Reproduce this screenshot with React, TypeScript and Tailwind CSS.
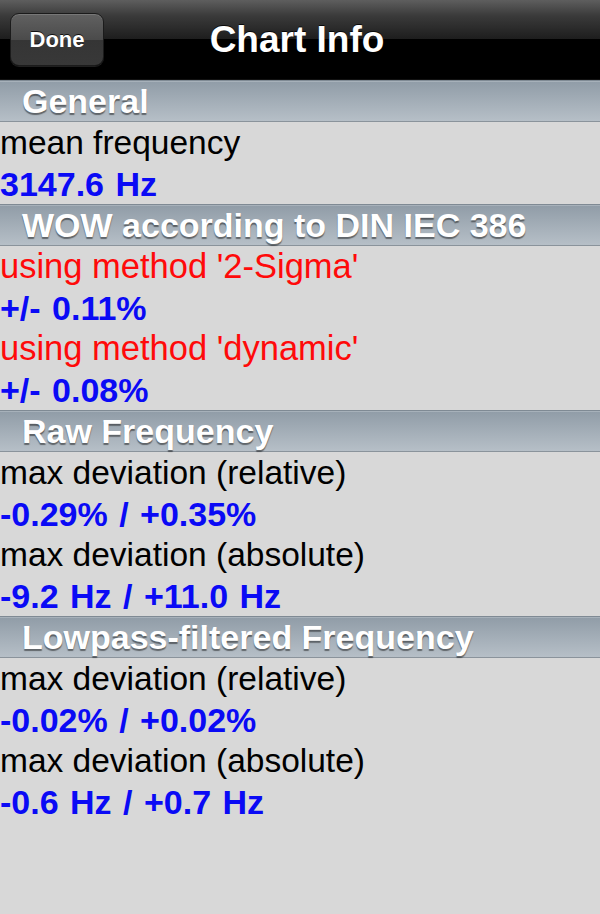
import React from "react";

type Row = { text: string; kind: "label" | "value" | "method" };
type Section = { title: string; rows: Row[] };

const sections: Section[] = [
  {
    title: "General",
    rows: [
      { text: "mean frequency", kind: "label" },
      { text: "3147.6 Hz", kind: "value" },
    ],
  },
  {
    title: "WOW according to DIN IEC 386",
    rows: [
      { text: "using method '2-Sigma'", kind: "method" },
      { text: "+/- 0.11%", kind: "value" },
      { text: "using method 'dynamic'", kind: "method" },
      { text: "+/- 0.08%", kind: "value" },
    ],
  },
  {
    title: "Raw Frequency",
    rows: [
      { text: "max deviation (relative)", kind: "label" },
      { text: "-0.29% / +0.35%", kind: "value" },
      { text: "max deviation (absolute)", kind: "label" },
      { text: "-9.2 Hz / +11.0 Hz", kind: "value" },
    ],
  },
  {
    title: "Lowpass-filtered Frequency",
    rows: [
      { text: "max deviation (relative)", kind: "label" },
      { text: "-0.02% / +0.02%", kind: "value" },
      { text: "max deviation (absolute)", kind: "label" },
      { text: "-0.6 Hz / +0.7 Hz", kind: "value" },
    ],
  },
];

const rowClass = {
  label: "text-black text-[33.5px]",
  value: "text-[#0a0af5] font-bold text-[34px] [word-spacing:2px]",
  method: "text-[#ff0a0a] text-[34.5px]",
};

const App = () => {
  return (
    <div className="w-[600px] h-[914px] bg-[#d8d8d8] font-['Liberation_Sans',Arial,sans-serif] overflow-hidden">
      {/* nav bar */}
      <header className="relative h-[80px] flex items-center justify-center bg-[linear-gradient(to_bottom,#5e5e5e_0%,#3a3a3a_20%,#1e1e1e_49%,#000_50%,#000_100%)] border-b border-[#111]">
        <button className="absolute left-[10px] top-[13px] w-[94px] h-[53px] rounded-[9px] border border-[#1b1b1b] bg-[linear-gradient(to_bottom,#616161_0%,#4b4b4b_50%,#353535_51%,#383838_100%)] shadow-[inset_0_1px_0_rgba(255,255,255,0.15),0_1px_0_rgba(255,255,255,0.12)] text-white font-bold text-[22px] [text-shadow:0_-1px_0_rgba(0,0,0,0.8)]">
          Done
        </button>
        <h1 className="text-white font-bold text-[37px] leading-none ml-[-6px] [text-shadow:0_-1px_0_rgba(0,0,0,0.8)]">
          Chart Info
        </h1>
      </header>

      {sections.map((s) => (
        <section key={s.title}>
          <div className="h-[42px] flex items-center pl-[22px] border-t border-b border-t-[#7f8a94] border-b-[#8a939b] bg-[linear-gradient(to_bottom,#909ca7,#b6bfc7)] shadow-[inset_0_1px_0_#a7b1ba]">
            <h2 className="text-white font-bold text-[34px] leading-none [text-shadow:0_2px_1px_rgba(0,0,0,0.45)]">
              {s.title}
            </h2>
          </div>
          {s.rows.map((r, i) => (
            <div
              key={i}
              className={`h-[41px] flex items-center leading-none whitespace-nowrap ${rowClass[r.kind]}`}
            >
              {r.text}
            </div>
          ))}
        </section>
      ))}
    </div>
  );
};

export default App;
